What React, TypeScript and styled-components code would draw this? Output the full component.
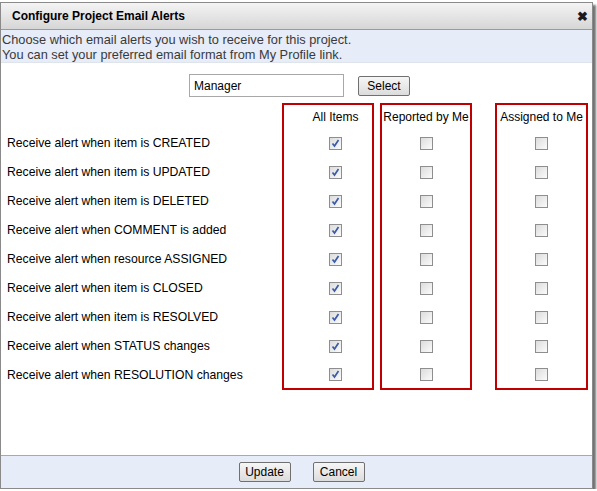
import React from "react";
import styled, { createGlobalStyle } from "styled-components";

const alerts = [
  "Receive alert when item is CREATED",
  "Receive alert when item is UPDATED",
  "Receive alert when item is DELETED",
  "Receive alert when COMMENT is added",
  "Receive alert when resource ASSIGNED",
  "Receive alert when item is CLOSED",
  "Receive alert when item is RESOLVED",
  "Receive alert when STATUS changes",
  "Receive alert when RESOLUTION changes",
];

// gap = space before the red box, shift = extra left padding inside it
const columns = [
  { title: "All Items", checked: true, gap: 0, shift: 15, width: 88 },
  { title: "Reported by Me", checked: false, gap: 6, shift: 0, width: 88 },
  { title: "Assigned to Me", checked: false, gap: 23, shift: 0, width: 89 },
];

const Check = ({ checked }: { checked: boolean }) => (
  <Box>
    {checked && (
      <svg width="9" height="9" viewBox="0 0 9 9">
        <path d="M1.5 4.5 L3.5 7 L7.5 1" fill="none" stroke="#3b5ba8" strokeWidth="1.7" />
      </svg>
    )}
  </Box>
);

const App = () => {
  return (
    <>
      <GlobalStyle />
      <Dialog>
        <TitleBar>
          <Title>Configure Project Email Alerts</Title>
          <Close>✖</Close>
        </TitleBar>
        <Intro>
          Choose which email alerts you wish to receive for this project.
          <br />
          You can set your preferred email format from My Profile link.
        </Intro>
        <Body>
          <SearchRow>
            <TextInput defaultValue="Manager" />
            <Button>Select</Button>
          </SearchRow>
          <Table>
            <Labels>
              {alerts.map((a) => (
                <Label key={a}>{a}</Label>
              ))}
            </Labels>
            {columns.map((c) => (
              <Column key={c.title} $gap={c.gap} $shift={c.shift} $width={c.width}>
                <Header>{c.title}</Header>
                {alerts.map((a) => (
                  <Cell key={a}>
                    <Check checked={c.checked} />
                  </Cell>
                ))}
              </Column>
            ))}
          </Table>
        </Body>
        <Footer>
          <Button>Update</Button>
          <Button>Cancel</Button>
        </Footer>
      </Dialog>
    </>
  );
};

export default App;

const GlobalStyle = createGlobalStyle`
  body {
    margin: 0;
    background: #fff;
    font-family: "Liberation Sans", Arial, sans-serif;
    font-size: 12px;
  }
`;

const Dialog = styled.div`
  margin-top: 2px;
  width: 591px;
  height: 485px;
  border: 1px solid #8a8a8a;
  background: #fff;
  box-shadow: 3px 3px 2px rgba(0, 0, 0, 0.55);
  display: flex;
  flex-direction: column;
`;

const TitleBar = styled.div`
  height: 26px;
  display: flex;
  align-items: center;
  justify-content: space-between;
  padding: 0 4px 0 11px;
  background: linear-gradient(#f4f4f4, #d6d6d6);
  border-bottom: 1px solid #9a9a9a;
`;

const Title = styled.div`
  font-weight: bold;
  font-size: 12px;
  color: #000;
`;

const Close = styled.div`
  font-size: 13px;
  font-weight: bold;
  color: #1a1a1a;
`;

const Intro = styled.div`
  background: #e6ecf8;
  color: #3a3a3a;
  font-size: 12.8px;
  line-height: 15px;
  padding: 2px 0 2px 1px;
  height: 28px;
  border-bottom: 1px solid #dfe3ea;
`;

const Body = styled.div`
  flex: 1;
  display: flex;
  flex-direction: column;
`;

const SearchRow = styled.div`
  display: flex;
  align-items: center;
  justify-content: center;
  gap: 14px;
  padding: 11px 0 0 6px;
`;

const TextInput = styled.input`
  box-sizing: border-box;
  width: 155px;
  height: 23px;
  border: 1px solid #a8a8a8;
  padding: 1px 4px;
  font-family: "Liberation Sans", Arial, sans-serif;
  font-size: 12px;
  color: #000;
  outline: none;
`;

const Button = styled.button`
  width: 52px;
  height: 20px;
  padding: 0;
  border: 1px solid #707070;
  border-radius: 2px;
  background: linear-gradient(#f6f6f6, #dcdcdc);
  font-family: "Liberation Sans", Arial, sans-serif;
  font-size: 12px;
  color: #000;
`;

const Table = styled.div`
  display: flex;
  margin-top: 6px;
`;

const Labels = styled.div`
  width: 281px;
  padding-top: 26px;
  display: flex;
  flex-direction: column;
`;

const Label = styled.div`
  height: 29px;
  line-height: 29px;
  padding-left: 6px;
  font-size: 12.2px;
  color: #000;
`;

const Column = styled.div<{ $gap: number; $shift: number; $width: number }>`
  margin-left: ${(p) => p.$gap}px;
  padding-left: ${(p) => p.$shift}px;
  width: ${(p) => p.$width - p.$shift}px;
  border: 2px solid #c00000;
  display: flex;
  flex-direction: column;
  align-items: center;
`;

const Header = styled.div`
  height: 24px;
  line-height: 24px;
  color: #000;
  white-space: nowrap;
`;

const Cell = styled.div`
  height: 29px;
  display: flex;
  align-items: center;
  justify-content: center;
  &:last-child {
    height: 27px;
  }
`;

const Box = styled.span`
  width: 11px;
  height: 11px;
  border: 1px solid #8e8e8e;
  background: linear-gradient(135deg, #dcdcdc, #fbfbfb);
  display: flex;
  align-items: center;
  justify-content: center;
`;

const Footer = styled.div`
  height: 32px;
  background: #e6ecf8;
  border-top: 1px solid #a9a9a9;
  display: flex;
  align-items: center;
  justify-content: center;
  gap: 22px;
  padding-left: 10px;
`;
